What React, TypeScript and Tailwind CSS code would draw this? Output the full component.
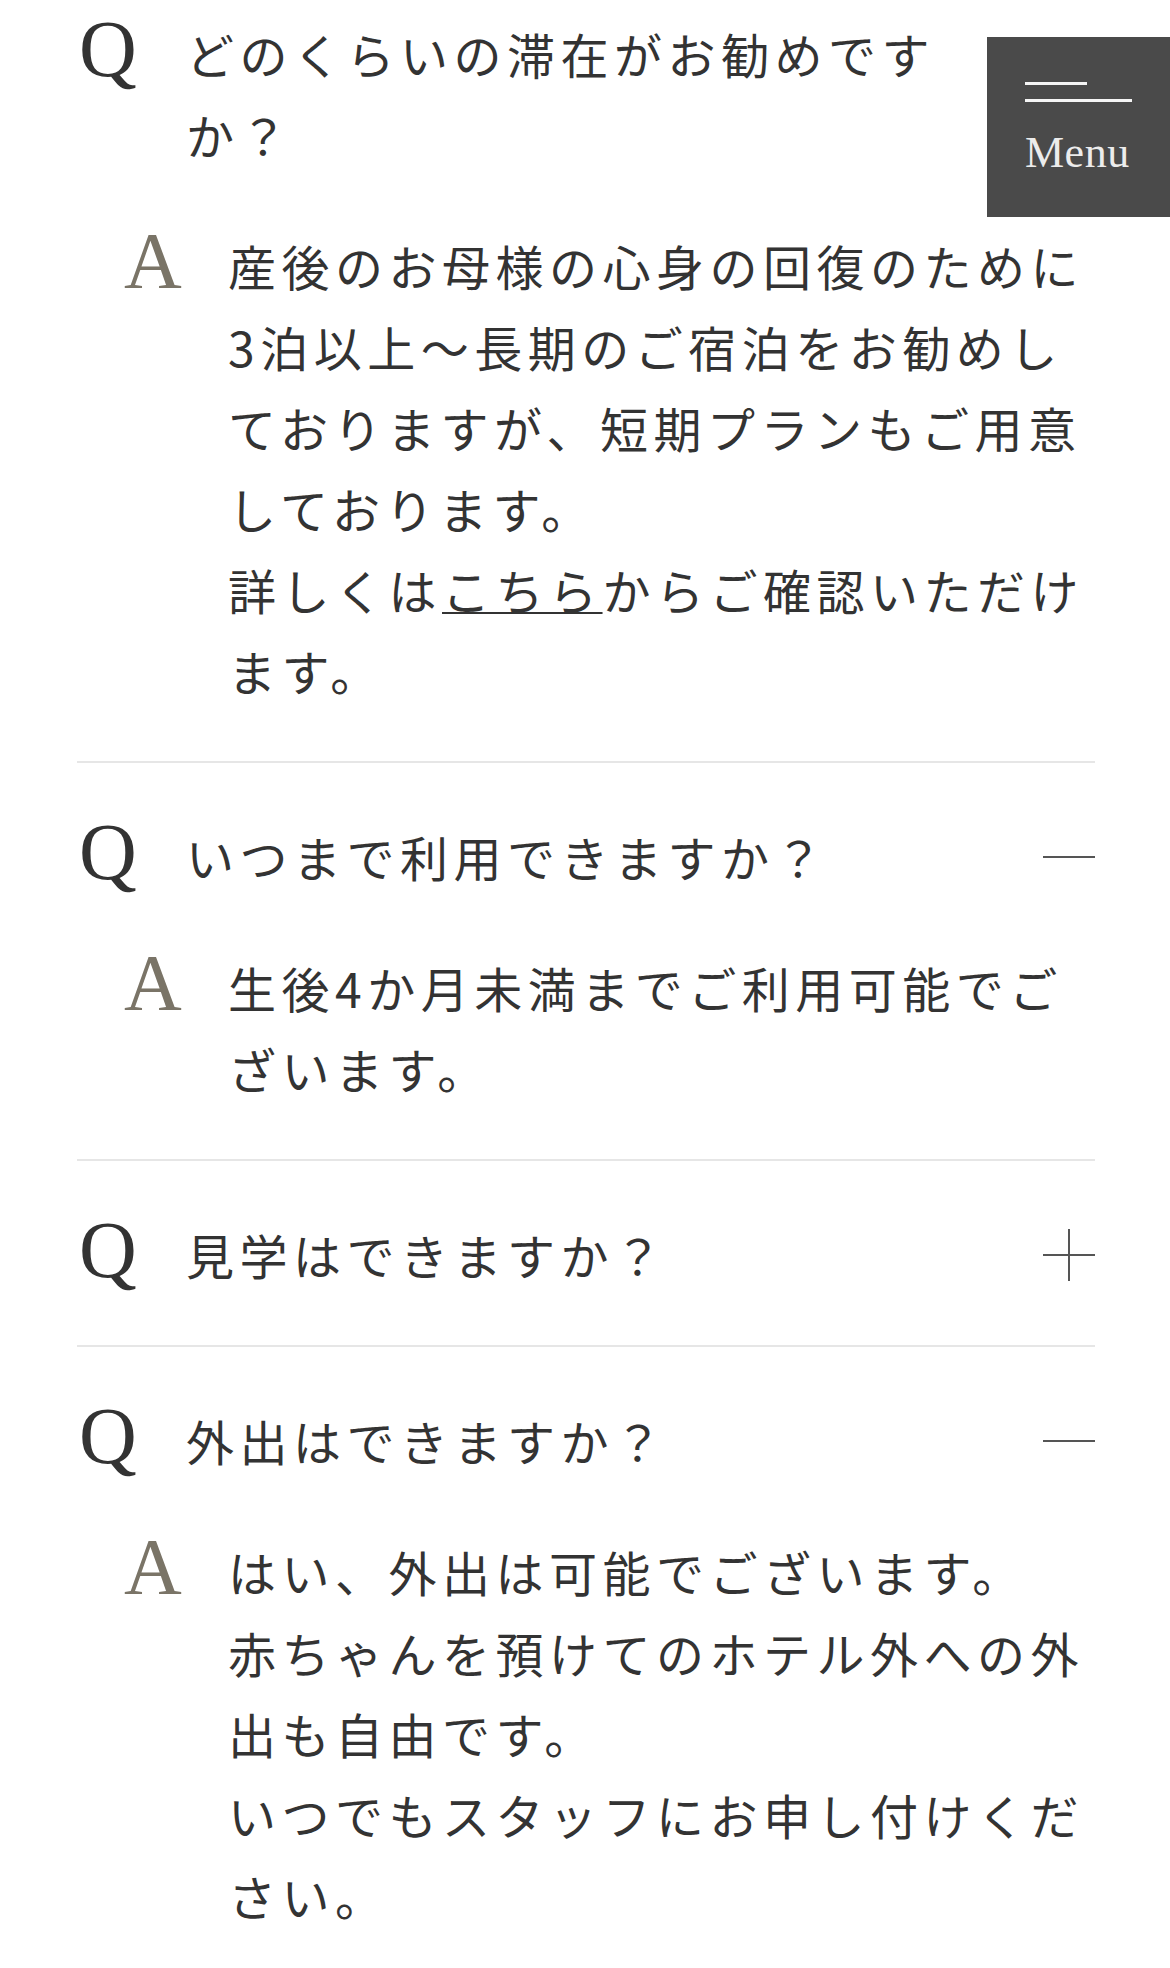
import { Fragment } from "react";

type FaqItem = {
  question: string;
  answer?: React.ReactNode;
  open: boolean;
};

const items: FaqItem[] = [
  {
    question: "どのくらいの滞在がお勧めですか？",
    open: true,
    answer: (
      <>
        産後のお母様の心身の回復のために3泊以上～長期のご宿泊をお勧めしておりますが、短期プランもご用意しております。
        <br />
        詳しくは
        <a
          href="#"
          className="underline decoration-[2px] underline-offset-[2px]"
        >
          こちら
        </a>
        からご確認いただけます。
      </>
    ),
  },
  {
    question: "いつまで利用できますか？",
    open: true,
    answer: <>生後4か月未満までご利用可能でございます。</>,
  },
  {
    question: "見学はできますか？",
    open: false,
  },
  {
    question: "外出はできますか？",
    open: true,
    answer: (
      <>
        はい、外出は可能でございます。
        <br />
        赤ちゃんを預けてのホテル外への外出も自由です。
        <br />
        いつでもスタッフにお申し付けください。
      </>
    ),
  },
];

function ToggleIcon({ open }: { open: boolean }) {
  return (
    <svg width="52" height="52" viewBox="0 0 52 52" fill="none">
      <line x1="0" y1="26" x2="52" y2="26" stroke="#555" strokeWidth="2" />
      {!open && (
        <line x1="26" y1="0" x2="26" y2="52" stroke="#555" strokeWidth="2" />
      )}
    </svg>
  );
}

function MenuButton() {
  return (
    <button className="fixed top-[37px] right-0 flex h-[180px] w-[183px] flex-col items-start bg-[#4a4a4a] pt-[45px] pl-[38px]">
      <span className="block h-[3px] w-[62px] bg-[#f5f5f5]" />
      <span className="mt-[14px] block h-[3px] w-[107px] bg-[#f5f5f5]" />
      <span className="mt-[29px] font-['Liberation_Serif',serif] text-[44px] leading-[44px] tracking-[0.5px] text-[#ececec]">
        Menu
      </span>
    </button>
  );
}

export default function App() {
  return (
    <div className="min-h-[1968px] overflow-hidden bg-white font-['Noto_Sans_CJK_JP',sans-serif] text-[#333]">
      <div className="-mt-[40px] pr-[75px] pl-[77px]">
        {items.map((item, i) => (
          <Fragment key={i}>
            <div className="border-b-2 border-[#e6e6e6] pt-[53px] pb-[50px]">
              <div className="flex items-start">
                <span className="-mt-[4px] w-[109px] shrink-0 pl-[2px] font-['Liberation_Serif',serif] text-[80px] leading-[81px] text-[#333]">
                  Q
                </span>
                <p className="mr-[88px] flex-1 text-[48px] leading-[81px] tracking-[5.5px]">
                  {item.question}
                </p>
                <span className="flex h-[81px] w-[52px] shrink-0 items-center">
                  <ToggleIcon open={item.open} />
                </span>
              </div>
              {item.open && item.answer && (
                <div className="mt-[50px] flex items-start pl-[47px]">
                  <span className="-mt-[4px] w-[104px] shrink-0 font-['Liberation_Serif',serif] text-[80px] leading-[81px] text-[#7a7467]">
                    A
                  </span>
                  <p className="flex-1 text-[48px] leading-[81px] tracking-[5.5px]">
                    {item.answer}
                  </p>
                </div>
              )}
            </div>
          </Fragment>
        ))}
      </div>
      <MenuButton />
    </div>
  );
}
